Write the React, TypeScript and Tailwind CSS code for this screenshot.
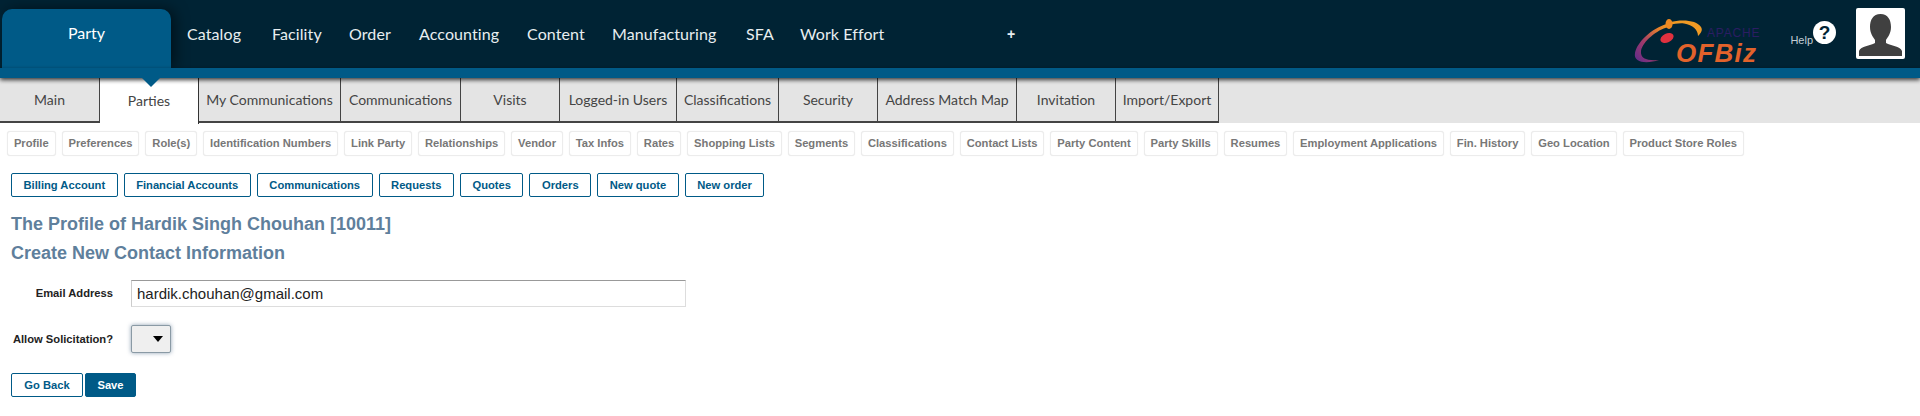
const nav = [
  { label: 'Catalog', cls: 'w-[85px]' },
  { label: 'Facility', cls: 'w-[77px]' },
  { label: 'Order', cls: 'w-[70px]' },
  { label: 'Accounting', cls: 'w-[108px]' },
  { label: 'Content', cls: 'w-[85px]' },
  { label: 'Manufacturing', cls: 'w-[134px]' },
  { label: 'SFA', cls: 'w-[54px]' },
  { label: 'Work Effort', cls: 'w-[207px]' },
]

const tabs = [
  { label: 'Main', cls: 'w-[100px]' },
  { label: 'Parties', cls: 'w-[99px]', active: true },
  { label: 'My Communications', cls: 'w-[142px]' },
  { label: 'Communications', cls: 'w-[120px]' },
  { label: 'Visits', cls: 'w-[99px]' },
  { label: 'Logged-in Users', cls: 'w-[117px]' },
  { label: 'Classifications', cls: 'w-[102px]' },
  { label: 'Security', cls: 'w-[99px]' },
  { label: 'Address Match Map', cls: 'w-[139px]' },
  { label: 'Invitation', cls: 'w-[99px]' },
  { label: 'Import/Export', cls: 'w-[103px]' },
]

const subLinks = [
  'Profile', 'Preferences', 'Role(s)', 'Identification Numbers', 'Link Party', 'Relationships', 'Vendor',
  'Tax Infos', 'Rates', 'Shopping Lists', 'Segments', 'Classifications', 'Contact Lists', 'Party Content',
  'Party Skills', 'Resumes', 'Employment Applications', 'Fin. History', 'Geo Location', 'Product Store Roles',
]

const actions = ['Billing Account', 'Financial Accounts', 'Communications', 'Requests', 'Quotes', 'Orders', 'New quote', 'New order']

function Logo() {
  return (
    <svg width="140" height="52" viewBox="0 0 140 52" className="shrink-0">
      <defs>
        <linearGradient id="swoosh" x1="0" y1="1" x2="1" y2="0">
          <stop offset="0" stopColor="#5b2a8c" />
          <stop offset="0.4" stopColor="#a03a6a" />
          <stop offset="0.8" stopColor="#e8832a" />
          <stop offset="1" stopColor="#f09a24" />
        </linearGradient>
      </defs>
      <path d="M35 8 C20 12 5 26 3 37 C1 47 15 48 27 44 C16 45 8 43 9 35 C11 25 25 14 36 11 Z" fill="url(#swoosh)" />
      <path d="M38 6 C50 3 65 4 69 11 C71 14 69 17 66 20 C66 14 61 9 52 7.5 C47 7 42 8 38 9 Z" fill="#f09a24" />
      <ellipse cx="37" cy="8" rx="3.5" ry="5" fill="#ee8a22" />
      <ellipse cx="35" cy="22" rx="7" ry="4.5" transform="rotate(-25 35 22)" fill="#e0313f" />
      <text x="75" y="21" fontFamily="'Liberation Sans', sans-serif" fontSize="12" letterSpacing="0.8" fill="#2b1d63">APACHE</text>
      <text x="44" y="46" fontFamily="'Liberation Sans', sans-serif" fontSize="26" fontWeight="700" fontStyle="italic" letterSpacing="1.2" fill="#e2622b">OFBiz</text>
    </svg>
  )
}

export default function App() {
  return (
    <div className="min-h-[416px] bg-white font-['Liberation_Sans',sans-serif] overflow-hidden">
      {/* top bar */}
      <div className="h-[68px] bg-[#002334] flex">
        <div className="ml-[2px] mt-[9px] w-[169px] h-[59px] bg-[#005a87] rounded-t-[10px] text-center text-white pt-[12px] text-[16px] leading-[24px] font-['Lato',sans-serif] shadow-[4px_0_14px_rgba(0,0,0,0.5)]">
          Party
        </div>
        <div className="flex ml-[16px]">
          {nav.map(n => (
            <div key={n.label} className={`${n.cls} shrink-0 pt-[22px] leading-[24px] text-[16px] tracking-[0.1px] text-[#e8eef0] font-['Lato',sans-serif]`}>
              {n.label}
            </div>
          ))}
          <div className="pt-[22px] leading-[24px] text-[14px] font-bold text-[#e8eef0]">+</div>
        </div>
        <div className="ml-auto flex shrink-0">
          <div className="mt-[16px]"><Logo /></div>
          <div className="ml-[18px] mt-[33px] text-[11px] leading-[14px] text-[#c4ced4]">Help</div>
          <div className="mt-[21px] w-[23px] h-[23px] rounded-full bg-white text-[#002334] text-[19px] leading-[23px] font-bold text-center shrink-0">?</div>
          <div className="ml-[20px] mr-[15px] mt-[8px] w-[49px] h-[51px] bg-white rounded-[2px] shrink-0 overflow-hidden">
            <svg width="49" height="51" viewBox="0 0 49 51">
              <path d="M24.5 6 C17 6 14 12 14 19 C14 25 17 29 19 32 L19 35 C14 38 5 38 3 43 L3 48 L46 48 L46 43 C44 38 35 38 30 35 L30 32 C32 29 35 25 35 19 C35 12 32 6 24.5 6 Z" fill="#404040" />
            </svg>
          </div>
        </div>
      </div>

      {/* blue strip */}
      <div className="h-[10px] bg-[#005a87] shadow-[0_2px_4px_rgba(0,0,0,0.75)] relative z-10" />

      {/* tabs */}
      <div className="h-[45px] bg-[#e4e4e4] flex">
        {tabs.map(t => (
          <div
            key={t.label}
            className={`${t.cls} shrink-0 text-center text-[14px] font-['Lato',sans-serif] ${t.active ? 'relative h-[46px] bg-white text-[#444] leading-[46px] border-r border-[#333]' : 'h-[45px] leading-[44px] text-[#444] border-r border-b-2 border-[#444]'}`}
          >
            {t.label}
            {t.active && (
              <div className="absolute z-20 top-0 left-[42px] w-0 h-0 border-l-[9px] border-r-[9px] border-t-[9px] border-l-transparent border-r-transparent border-t-[#005a87]" />
            )}
          </div>
        ))}
      </div>

      {/* sub links */}
      <div className="flex gap-[6px] pl-[7px] mt-[8px]">
        {subLinks.map(s => (
          <div key={s} className="h-[25px] px-[5.9px] leading-[22px] border border-[#ececec] rounded-[3px] text-[11.2px] font-bold text-[#777] bg-white shrink-0 shadow-[0_0_1px_rgba(0,0,0,0.1)]">
            {s}
          </div>
        ))}
      </div>

      {/* action buttons */}
      <div className="flex gap-[6px] pl-[11px] mt-[17px]">
        {actions.map(a => (
          <div key={a} className="h-[24px] px-[11.5px] leading-[22px] border border-[#005a87] rounded-[2px] text-[11.2px] font-bold text-[#005a87] bg-white shrink-0">
            {a}
          </div>
        ))}
      </div>

      <h1 className="ml-[11px] mt-[15px] text-[18px] leading-[24px] font-bold text-[#5f7f9c]">The Profile of Hardik Singh Chouhan [10011]</h1>
      <h2 className="ml-[11px] mt-[5px] text-[18px] leading-[24px] font-bold text-[#5f7f9c]">Create New Contact Information</h2>

      {/* form */}
      <div className="mt-[15px] flex items-center h-[27px]">
        <div className="w-[113px] text-right text-[11.2px] font-bold text-[#222]">Email Address</div>
        <input
          readOnly
          value="hardik.chouhan@gmail.com"
          className="ml-[18px] w-[555px] h-[27px] px-[5px] text-[15px] text-[#222] border border-[#ddd] border-t-[#999] border-l-[#ccc] outline-none bg-white"
        />
      </div>
      <div className="mt-[18px] flex items-center h-[28px]">
        <div className="w-[113px] text-right text-[11.2px] font-bold text-[#222]">Allow Solicitation?</div>
        <div className="ml-[18px] w-[40px] h-[28px] bg-[#efefef] border border-[#8a9aa5] rounded-[2px] shadow-[0_0_4px_rgba(70,100,130,0.6)] flex items-center justify-end pr-[7px]">
          <div className="w-0 h-0 border-l-[5px] border-r-[5px] border-t-[6px] border-l-transparent border-r-transparent border-t-black" />
        </div>
      </div>

      <div className="flex gap-[2px] pl-[11px] mt-[20px]">
        <div className="h-[24px] w-[72px] text-center leading-[22px] border border-[#005a87] rounded-[2px] text-[11.2px] font-bold text-[#005a87] bg-white">Go Back</div>
        <div className="h-[24px] w-[51px] text-center leading-[22px] border border-[#005a87] rounded-[2px] text-[11.2px] font-bold text-white bg-[#005a87]">Save</div>
      </div>
    </div>
  )
}
